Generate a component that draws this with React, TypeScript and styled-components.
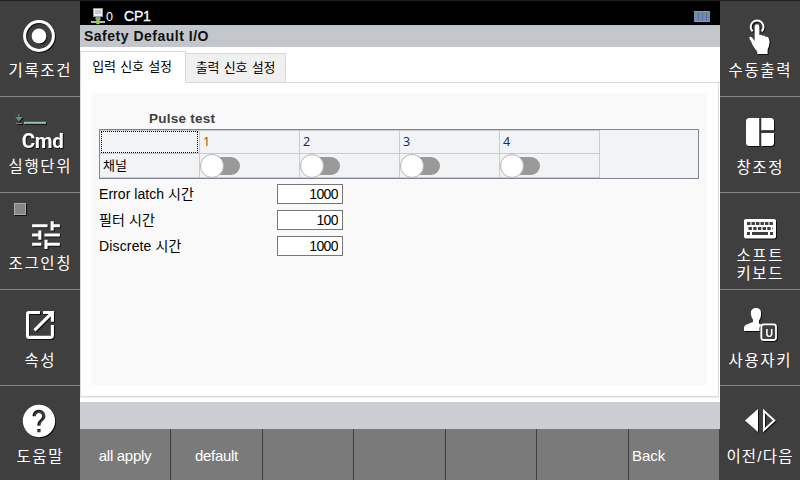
import React from "react";
import styled, { createGlobalStyle } from "styled-components";
import { MdTune, MdOpenInNew, MdHelp } from "react-icons/md";

const KR = `"Liberation Sans", "Noto Sans CJK KR", sans-serif`;

const GlobalStyle = createGlobalStyle`
  * { box-sizing: border-box; }
  body { margin: 0; background: #3f3f3f; font-family: ${KR}; }
  button, input { font-family: inherit; margin: 0; border-radius: 0; }
`;

const Screen = styled.div`
  display: grid;
  grid-template-columns: 80px 640px 80px;
  width: 800px;
  height: 480px;
  overflow: hidden;
`;

const SideBar = styled.nav`
  display: grid;
  grid-template-rows: 96px 96px 97px 96px 95px;
  background: #3f3f3f;
`;

const SideButton = styled.button<{ $first?: boolean }>`
  display: flex;
  flex-direction: column;
  align-items: center;
  padding: 0;
  border: 0;
  background: transparent;
  color: #fff;
  box-shadow: inset 0 1px 0 ${(p) => (p.$first ? "#202020" : "#868686")};
`;

const IconCanvas = styled.svg`
  display: block;
  flex: none;
  width: 80px;
  height: 56px;
  overflow: visible;
  color: #fff;
  filter: drop-shadow(1px 1px 0.5px rgba(0, 0, 0, 0.75));
`;

const SideLabel = styled.span<{ $top: number; $spacing: number }>`
  margin-top: ${(p) => p.$top}px;
  padding-left: ${(p) => p.$spacing - 1}px;
  font-size: 15.5px;
  line-height: 18px;
  letter-spacing: ${(p) => p.$spacing}px;
  white-space: pre;
  text-align: center;
`;

const Main = styled.main`
  display: flex;
  flex-direction: column;
  background: #fff;
`;

const StatusBar = styled.header`
  display: flex;
  align-items: center;
  height: 25px;
  padding: 6px 10px 0 11px;
  background: #000;
  border-top: 1px solid #202020;
  color: #fff;
`;

const StatusIndex = styled.span`
  width: 19px;
  padding-left: 1px;
  padding-top: 2px;
  font-size: 12.5px;
  line-height: 16px;
`;

const StatusName = styled.span`
  flex: 1;
  font-size: 14px;
  line-height: 16px;
  letter-spacing: -0.2px;
  -webkit-text-stroke: 0.3px #fff;
`;

const TitleBar = styled.h1`
  height: 22px;
  margin: 0;
  padding-left: 4px;
  background: #c3c7cb;
  color: #111;
  font-size: 14px;
  font-weight: 700;
  line-height: 23px;
  letter-spacing: 0.5px;
`;

const TabRow = styled.div`
  display: flex;
  align-items: flex-end;
  height: 36px;
  padding-top: 4px;
`;

const Tab = styled.button<{ $active?: boolean }>`
  height: ${(p) => (p.$active ? 32 : 30)}px;
  width: ${(p) => (p.$active ? 106 : 100)}px;
  padding: 0 ${(p) => (p.$active ? 2 : 0)}px ${(p) => (p.$active ? 3 : 3)}px 0;
  background: ${(p) => (p.$active ? "#fff" : "#f0f0f0")};
  border: 1px solid #d9d9d9;
  border-left-width: ${(p) => (p.$active ? 1 : 0)}px;
  border-bottom-color: ${(p) => (p.$active ? "#fff" : "#d9d9d9")};
  color: #000;
  font-size: 13px;
  letter-spacing: -0.2px;
  word-spacing: 1px;
  white-space: nowrap;
`;

const TabRule = styled.div`
  flex: 1;
  border-bottom: 1px solid #d9d9d9;
`;

const TabPage = styled.section`
  height: 314px;
  width: 639px;
  padding: 10px 11px 11px 10px;
  border: 1px solid #dcdcdc;
  border-top: 0;
  box-shadow: 0 1px 0 #ededed;
`;

const Panel = styled.div`
  height: 292px;
  padding: 17px 8px 0;
  background: #f9f9f9;
`;

const PulseTitle = styled.h2`
  margin: 0 0 2px 50px;
  height: 17px;
  color: #3f3f3f;
  font-size: 13.5px;
  line-height: 17px;
  font-weight: 700;
  letter-spacing: 0.25px;
`;

const ChannelTable = styled.div`
  display: grid;
  grid-template-columns: 100px repeat(4, 100px);
  grid-template-rows: 24px 24px;
  width: 600px;
  height: 50px;
  border: 1px solid #80868f;
  background: #f1f3f5;
  color: #000;
`;

const Cell = styled.div<{ $head?: boolean }>`
  display: flex;
  align-items: center;
  padding-left: ${(p) => (p.$head ? 3 : 0)}px;
  padding-bottom: ${(p) => (p.$head ? 2 : 0)}px;
  border-right: 1px solid #c9cbcd;
  border-bottom: 1px solid #c9cbcd;
  font-size: 13px;
  letter-spacing: ${(p) => (p.$head ? 0 : 1.5)}px;
`;

const NumberCell = styled(Cell)<{ $color: string }>`
  padding-left: 3px;
  padding-bottom: 2px;
  color: ${(p) => p.$color};
  font-family: "Noto Sans", sans-serif;
  font-size: 12.5px;
  border-top: 1px solid #c9cbcd;
`;

const FocusCell = styled(Cell)`
  padding: 0 1px 0 1px;
  border-top: 1px solid #c9cbcd;
`;

const FocusRing = styled.div`
  width: 97px;
  height: 22px;
  border: 1px dotted #000;
`;

const Switch = styled.button`
  display: flex;
  align-items: center;
  width: 40px;
  height: 23px;
  padding: 0;
  border: 0;
  background: transparent;
`;

const Track = styled.span`
  width: 28px;
  height: 18px;
  margin-left: -12px;
  border-radius: 0 9px 9px 0;
  background: #999;
`;

const Thumb = styled.span`
  z-index: 1;
  width: 24px;
  height: 24px;
  flex: none;
  border: 1px solid #b4b4b4;
  border-radius: 50%;
  background: #fff;
`;

const Fields = styled.div`
  display: grid;
  gap: 6px;
  margin-top: 5px;
`;

const Field = styled.label`
  display: grid;
  grid-template-columns: 178px 66px;
  align-items: center;
  height: 20px;
  color: #000;
  font-size: 14px;
`;

const FieldName = styled.span<{ $spacing: number }>`
  letter-spacing: ${(p) => p.$spacing}px;
  white-space: nowrap;
  line-height: 20px;
`;

const FieldInput = styled.input`
  width: 66px;
  height: 20px;
  padding: 0 4px 0 0;
  border: 1px solid #767676;
  background: #fff;
  color: #000;
  font-size: 14px;
  letter-spacing: -0.6px;
  text-align: right;
  outline: none;
`;

const MessageBar = styled.div`
  height: 27px;
  margin-top: 5px;
  background: #caced3;
`;

const FunctionBar = styled.footer`
  display: grid;
  grid-template-columns: 91px 92px 91px 92px 91px 92px 90px;
  height: 51px;
  background: #3f3f3f;
`;

const FunctionKey = styled.button<{ $left?: boolean; $last?: boolean }>`
  padding: ${(p) => (p.$left ? "1px 0 0 3px" : "1px 0 0")};
  border: 0;
  border-right: ${(p) => (p.$last ? 0 : 1)}px solid #3f3f3f;
  background: #7a7a7a;
  color: #fff;
  font-size: 15px;
  letter-spacing: ${(p) => (p.$left ? 0 : -0.3)}px;
  text-align: ${(p) => (p.$left ? "left" : "center")};
`;

const RecordIcon = () => (
  <IconCanvas viewBox="0 0 80 56">
    <circle cx="39" cy="36" r="14.4" fill="none" stroke="#fff" strokeWidth="3" />
    <circle cx="39" cy="36" r="7.4" fill="#fff" />
  </IconCanvas>
);

const CmdIcon = () => (
  <IconCanvas viewBox="0 0 80 56">
    <path d="M19 18v6M16.5 21.5h5L19 24.5z M16 27.5h6" stroke="#5f9483" fill="#5f9483" strokeWidth="1.2" />
    <path d="M24 26.8h22" stroke="#8fc9b5" strokeWidth="2" />
    <text x="21.8" y="52" fill="#fff" fontFamily="Roboto" fontSize="20.5" fontWeight="700" textLength="42">Cmd</text>
  </IconCanvas>
);

const JogIcon = () => (
  <IconCanvas viewBox="0 0 80 56">
    <rect x="14.5" y="11.5" width="11" height="11" fill="#858585" stroke="#a7adbb" />
    <MdTune x="27.5" y="24.5" size={37} />
  </IconCanvas>
);

const PropertiesIcon = () => (
  <IconCanvas viewBox="0 0 80 56">
    <MdOpenInNew x="21.3" y="17.3" size={37.3} />
  </IconCanvas>
);

const HelpIcon = () => (
  <IconCanvas viewBox="0 0 80 56">
    <MdHelp x="19.6" y="16.6" size={38.8} />
  </IconCanvas>
);

const TouchIcon = () => (
  <IconCanvas viewBox="0 0 80 56">
    <path d="M32.600 31.400a6.400 6.400 0 1 1 9 0" fill="none" stroke="#fff" strokeWidth="2" />
    <path
      d="M34.700 26.500q0-2.300 2.300-2.300t2.400 2.300V35q2-1 3.200.9 2-.9 3.100 1 2-.6 2.900 1.200 1 1.800.9 5-.1 3.400-1.900 6.400V54H37.300v-2.400c-2-2-4.300-5.500-6-9.600-.7-1.500-2-3.200-2-4.200 0-1.300 1.800-1.400 3 0l2.400 3z"
      fill="#fff"
    />
  </IconCanvas>
);

const WindowsIcon = () => (
  <IconCanvas viewBox="0 0 80 56">
    <path d="M29.500 22h9.800v28h-9.800q-3.500 0-3.500-3.500v-21q0-3.500 3.500-3.500zM41.300 22H50.500q3.500 0 3.500 3.500v8.800H41.300zM41.300 37H54V46.500q0 3.500-3.500 3.500h-9.200z" fill="#fff" />
  </IconCanvas>
);

const KeyboardIcon = () => (
  <IconCanvas viewBox="0 0 80 56">
    <rect x="24" y="27" width="32" height="19.500" rx="2" fill="#fff" />
    <path d="M27 31.500h26" stroke="#3f3f3f" strokeWidth="3" strokeDasharray="3.400 1.100" />
    <path d="M28.500 36.500h24" stroke="#3f3f3f" strokeWidth="3" strokeDasharray="3.400 1.300" />
    <path d="M27 41.500h3M32 41.500h16M50 41.500h3" stroke="#3f3f3f" strokeWidth="3" />
  </IconCanvas>
);

const UserKeyIcon = () => (
  <IconCanvas viewBox="0 0 80 56">
    <path d="M31 26c-.5-5 1.300-7 5-7s5.500 2 5 7c-.3 3-1 4.300-2 5.500v3l3 1.500q-2.500 1-2.500 3v3H24v-3.500q0-2 2.500-3l6.500-2.500v-2.500c-1-1.200-1.700-2.500-2-5.500z" fill="#fff" />
    <rect x="41.300" y="35.300" width="14.700" height="15.700" rx="2.500" fill="#3f3f3f" stroke="#fff" strokeWidth="1.800" />
    <text x="45.600" y="48" fill="#fff" fontFamily="Liberation Sans" fontSize="10.500" fontWeight="700">U</text>
  </IconCanvas>
);

const PrevNextIcon = () => (
  <IconCanvas viewBox="0 0 80 56">
    <path d="M38 24v23L25 35.500z" fill="#fff" />
    <path d="M44 26v19l10.300-9.500z" fill="none" stroke="#fff" strokeWidth="2" />
  </IconCanvas>
);

const NetworkIcon = () => (
  <svg width="14" height="17" viewBox="0 0 14 17">
    <rect x="2.500" y="0.500" width="9" height="8" fill="#eee" stroke="#999" />
    <rect x="4" y="2" width="6" height="4" fill="#c9cdd0" />
    <path d="M4.500 9h5v3h-5z" fill="#999" />
    <path d="M0 14h14" stroke="#b5b5b5" strokeWidth="2" />
    <circle cx="7" cy="14" r="2.300" fill="#80d82c" />
  </svg>
);

const MemoryIcon = () => (
  <svg width="16" height="11" viewBox="0 0 16 11">
    <rect width="16" height="11" fill="#7188b8" />
    <path d="M0 .5h16M0 10.500h16" stroke="#7d9de0" />
    <path d="M1 4h14" stroke="#55a06c" strokeWidth="2" strokeDasharray="2 1" />
    <path d="M4.500 1v9M8.500 1v9M12.500 1v9" stroke="#5f7098" />
  </svg>
);

type SideItem = { icon: React.ReactNode; label: string; top: number; spacing: number };

const leftItems: SideItem[] = [
  { icon: <RecordIcon />, label: "기록조건", top: 6, spacing: 1.7 },
  { icon: <CmdIcon />, label: "실행단위", top: 6, spacing: 1.7 },
  { icon: <JogIcon />, label: "조그인칭", top: 7, spacing: 1.7 },
  { icon: <PropertiesIcon />, label: "속성", top: 7, spacing: 1.7 },
  { icon: <HelpIcon />, label: "도움말", top: 7, spacing: 1.7 },
];

const rightItems: SideItem[] = [
  { icon: <TouchIcon />, label: "수동출력", top: 6, spacing: 1.7 },
  { icon: <WindowsIcon />, label: "창조정", top: 7, spacing: 1.7 },
  { icon: <KeyboardIcon />, label: "소프트\n키보드", top: -1, spacing: 1.7 },
  { icon: <UserKeyIcon />, label: "사용자키", top: 7, spacing: 1.7 },
  { icon: <PrevNextIcon />, label: "이전/다음", top: 7, spacing: 1.2 },
];

const channels = [
  { id: "1", color: "#a8560c" },
  { id: "2", color: "#0c2f7a" },
  { id: "3", color: "#0c2f7a" },
  { id: "4", color: "#0c2f7a" },
];

const fields = [
  { name: "Error latch 시간", value: "1000", spacing: 0.05 },
  { name: "필터 시간", value: "100", spacing: 0.1 },
  { name: "Discrete 시간", value: "1000", spacing: 0.15 },
];

const functionKeys = ["all apply", "default", "", "", "", "", "Back"];

const Side = ({ items }: { items: SideItem[] }) => (
  <SideBar>
    {items.map((item, i) => (
      <SideButton key={item.label} $first={i === 0}>
        {item.icon}
        <SideLabel $top={item.top} $spacing={item.spacing}>{item.label}</SideLabel>
      </SideButton>
    ))}
  </SideBar>
);

export default function App() {
  return (
    <Screen>
      <GlobalStyle />
      <Side items={leftItems} />
      <Main>
        <StatusBar>
          <NetworkIcon />
          <StatusIndex>0</StatusIndex>
          <StatusName>CP1</StatusName>
          <MemoryIcon />
        </StatusBar>
        <TitleBar>Safety Default I/O</TitleBar>
        <TabRow>
          <Tab $active>입력 신호 설정</Tab>
          <Tab>출력 신호 설정</Tab>
          <TabRule />
        </TabRow>
        <TabPage>
          <Panel>
            <PulseTitle>Pulse test</PulseTitle>
            <ChannelTable>
              <FocusCell><FocusRing /></FocusCell>
              {channels.map((c) => (
                <NumberCell key={c.id} $color={c.color}>{c.id}</NumberCell>
              ))}
              <Cell $head>채널</Cell>
              {channels.map((c) => (
                <Cell key={c.id}>
                  <Switch role="switch" aria-checked={false}>
                    <Thumb />
                    <Track />
                  </Switch>
                </Cell>
              ))}
            </ChannelTable>
            <Fields>
              {fields.map((f) => (
                <Field key={f.name}>
                  <FieldName $spacing={f.spacing}>{f.name}</FieldName>
                  <FieldInput defaultValue={f.value} />
                </Field>
              ))}
            </Fields>
          </Panel>
        </TabPage>
        <MessageBar />
        <FunctionBar>
          {functionKeys.map((key, i) => (
            <FunctionKey key={i} $left={key === "Back"} $last={i === 6}>{key}</FunctionKey>
          ))}
        </FunctionBar>
      </Main>
      <Side items={rightItems} />
    </Screen>
  );
}
